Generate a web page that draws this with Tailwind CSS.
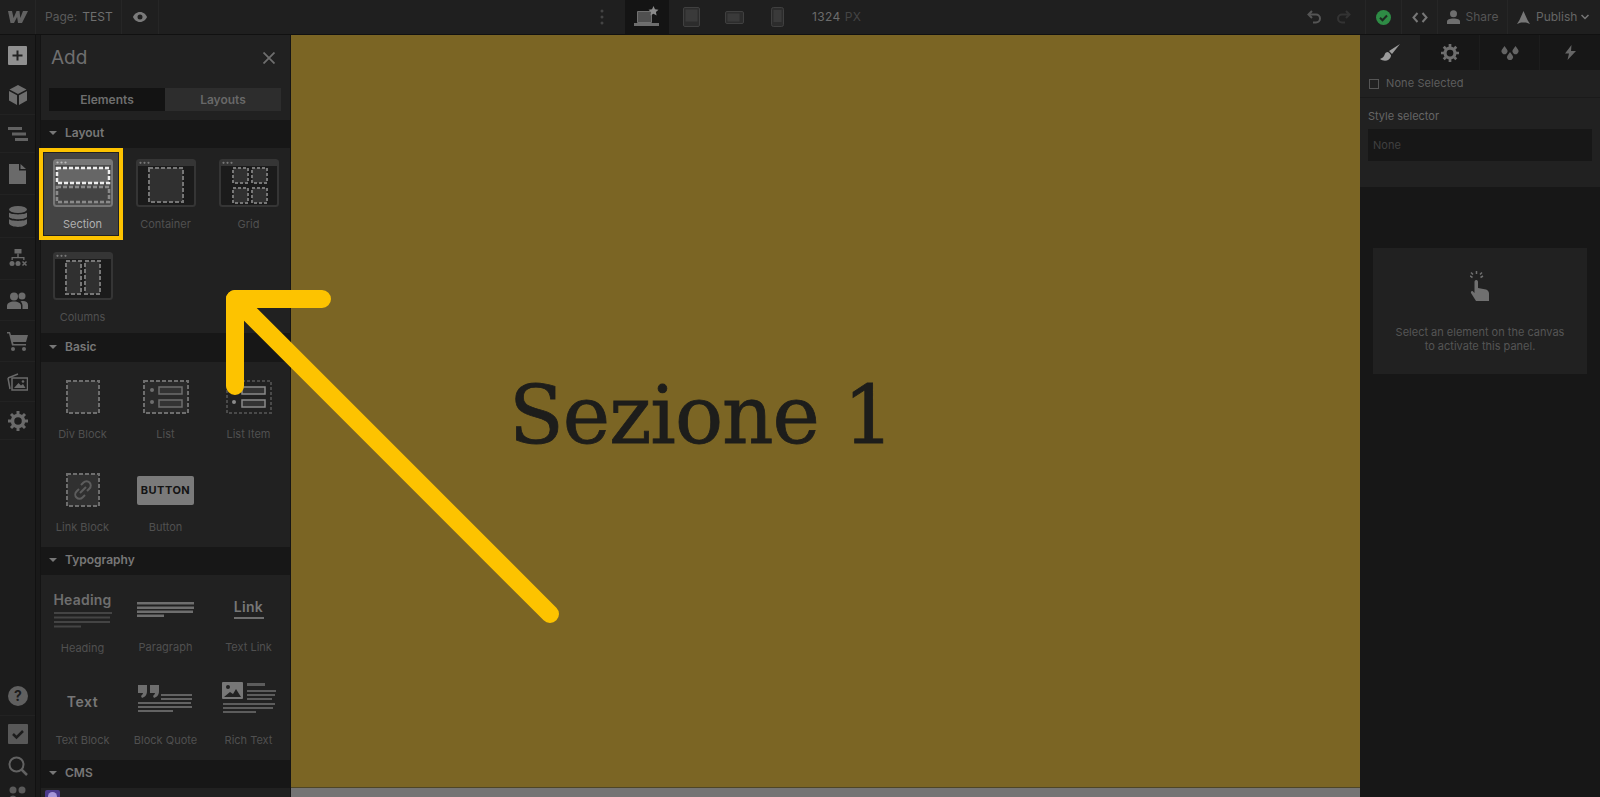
<!DOCTYPE html>
<html lang="en">
<head>
<meta charset="UTF-8">
<title>Webflow Designer</title>
<script src="https://cdn.jsdelivr.net/npm/@tailwindcss/browser@4"></script>
</head>
<body class="bg-[#171717] font-['Inter','Liberation_Sans',sans-serif] overflow-hidden">
<div class="h-[797px] w-[1600px] flex flex-col overflow-hidden relative">

    <!-- Top bar -->
    <header class="h-[35px] shrink-0 flex items-center bg-[#1f1f1f] border-b border-[#111] text-[12px] text-[#666]">
        <div class="w-[36px] h-full flex items-center justify-center border-r border-[#262626]">
            <svg width="20" height="14" viewBox="0 0 20 14" fill="#626262"><path d="M0 1h4l1.600 7L8.500 1h3l.8 7L15 1h5l-6 12h-4l-.9-6L6 13H2.500z"/></svg>
        </div>
        <div class="w-[86px] h-full pl-[9px] flex items-center gap-[5px] border-r border-[#262626]"><span class="text-[#5a5a5a]">Page:</span><span class="text-[#6e6e6e]">TEST</span></div>
        <div class="w-[37px] h-full flex items-center justify-center border-r border-[#262626]">
            <svg width="14" height="10" viewBox="0 0 14 10" fill="#7a7a7a"><path fill-rule="evenodd" d="M7 0c3.500 0 6 2.500 7 5-1 2.500-3.500 5-7 5S1 7.500 0 5c1-2.500 3.500-5 7-5zm0 2.500a2.500 2.500 0 1 0 0 5 2.500 2.500 0 0 0 0-5z"/></svg>
        </div>
        <div class="w-[466px] h-full flex items-center justify-end pr-[21px]">
            <svg width="4" height="16" viewBox="0 0 4 16" fill="#444"><circle cx="2" cy="2" r="1.500"/><circle cx="2" cy="8" r="1.500"/><circle cx="2" cy="14" r="1.500"/></svg>
        </div>
        <div class="w-[44px] h-full bg-[#141414] flex items-center justify-center">
            <svg width="26" height="22" viewBox="0 0 26 22"><path d="M3.500 5.500h14v11h-14z" fill="#505050" stroke="#707070"/><path d="M0 17h25v3H0z" fill="#6d6d6d"/><path d="M19.500 0l1.500 3.300 3.500.4-2.600 2.400.7 3.500-3.100-1.800-3.100 1.800.7-3.500-2.600-2.400 3.500-.4z" fill="#8a8a8a"/></svg>
        </div>
        <div class="w-[44px] h-full flex items-center justify-center">
            <svg width="17" height="20" viewBox="0 0 17 20"><rect x=".5" y=".5" width="16" height="19" rx="1.500" fill="#2c2c2c" stroke="#404040"/><rect x="2.500" y="2.500" width="12" height="12" fill="#3a3a3a"/></svg>
        </div>
        <div class="w-[42px] h-full flex items-center justify-center">
            <svg width="19" height="13" viewBox="0 0 19 13"><rect x=".5" y=".5" width="18" height="12" rx="1.500" fill="#2c2c2c" stroke="#404040"/><rect x="2.500" y="2.500" width="12" height="8" fill="#3a3a3a"/></svg>
        </div>
        <div class="w-[45px] h-full flex items-center justify-center">
            <svg width="13" height="20" viewBox="0 0 13 20"><rect x=".5" y=".5" width="12" height="19" rx="2" fill="#2c2c2c" stroke="#404040"/><rect x="2.500" y="3" width="8" height="12" fill="#3a3a3a"/></svg>
        </div>
        <div class="pl-[12px] w-[500px] flex items-center gap-[4px] tracking-[.4px]"><span class="text-[#6b6b6b]">1324</span><span class="text-[#444]">PX</span></div>

        <div class="w-[29px] flex justify-center">
            <svg width="15" height="14" viewBox="0 0 15 14" fill="none" stroke="#555" stroke-width="2"><path d="M5 1L1.500 4.500 5 8"/><path d="M2 4.500h7a4 4 0 0 1 0 8H6"/></svg>
        </div>
        <div class="w-[29px] flex justify-center mr-[7px]">
            <svg width="15" height="14" viewBox="0 0 15 14" fill="none" stroke="#333" stroke-width="2"><path d="M10 1l3.500 3.500L10 8"/><path d="M13 4.500H6a4 4 0 0 0 0 8h3"/></svg>
        </div>
        <div class="w-[36px] h-full flex items-center justify-center border-l border-[#262626]">
            <svg width="15" height="15" viewBox="0 0 15 15"><circle cx="7.500" cy="7.500" r="7.500" fill="#2e8b45"/><path d="M4 7.800l2.500 2.500L11 5.500" fill="none" stroke="#1d2a20" stroke-width="2"/></svg>
        </div>
        <div class="w-[36px] h-full flex items-center justify-center border-l border-[#262626]">
            <svg width="16" height="11" viewBox="0 0 16 11" fill="none" stroke="#777" stroke-width="2"><path d="M5.500 1L1.500 5.500 5.500 10"/><path d="M10.500 1l4 4.500-4 4.500"/></svg>
        </div>
        <div class="w-[70px] h-full flex items-center justify-center gap-[6px] border-l border-[#262626]">
            <svg width="13" height="14" viewBox="0 0 13 14" fill="#6f6f6f"><circle cx="6.500" cy="3.800" r="3.500"/><path d="M0 14v-2.500C0 9.500 2.500 8.500 6.500 8.500s6.500 1 6.500 3V14z"/></svg>
            <span class="text-[#555]">Share</span>
        </div>
        <div class="flex-1 h-full flex items-center pl-[9px] border-l border-[#262626]">
            <svg width="13" height="13" viewBox="0 0 13 13" fill="#777"><path d="M6.500 0l4 9 2.500 4-4-1.500h-5L0 13l2.500-4z"/></svg>
            <span class="text-[#666] ml-[6px] mr-[4px]">Publish</span>
            <svg width="8" height="6" viewBox="0 0 8 6" fill="none" stroke="#777" stroke-width="1.500"><path d="M.5 1l3.500 3.500L7.500 1"/></svg>
        </div>
    </header>

    <svg class="hidden">
        <symbol id="frame" viewBox="0 0 60 48">
            <rect x="1" y="1" width="58" height="46" rx="2.500" fill="#1b1b1b" stroke="#353535" stroke-width="2"/>
            <rect x="1" y="1" width="58" height="6" fill="#353535"/>
            <circle cx="4.500" cy="3.800" r="1.100" fill="#777"/><circle cx="8.500" cy="3.800" r="1.100" fill="#777"/><circle cx="12.500" cy="3.800" r="1.100" fill="#777"/>
        </symbol>
        <symbol id="dashbox" viewBox="0 0 34 34">
            <rect x="1" y="1" width="32" height="32" fill="#303030" stroke="#6e6e6e" stroke-width="2" stroke-dasharray="4 2"/>
        </symbol>
    </svg>

    <div class="flex-1 flex min-h-0">
        <!-- Left rail -->
        <nav class="w-[36px] shrink-0 bg-[#1c1c1c] border-r border-[#111] relative">
            <div class="h-[40px] flex items-center justify-center">
                <svg width="19" height="19" viewBox="0 0 19 19"><rect width="19" height="19" rx="1" fill="#909090"/><path d="M9.500 4.500v10M4.500 9.500h10" stroke="#222" stroke-width="2"/></svg>
            </div>
            <div class="h-[40px] flex items-center justify-center border-b border-[#222]">
                <svg width="20" height="20" viewBox="0 0 20 20" fill="#6e6e6e"><path d="M10 0l8.500 4.500L10 9 1.500 4.500z"/><path d="M1 6l8 4.300V20l-8-4.500z"/><path d="M19 6l-8 4.300V20l8-4.500z"/></svg>
            </div>
            <div class="h-[38px] flex items-center justify-center border-b border-[#222]">
                <svg width="20" height="16" viewBox="0 0 20 16" fill="#626262"><path d="M0 1h14v3H0zM4 6.500h14v3H4zM7 12h13v3H7z"/></svg>
            </div>
            <div class="h-[42px] flex items-center justify-center border-b border-[#222]">
                <svg width="17" height="20" viewBox="0 0 17 20" fill="#6a6a6a"><path d="M0 0h10v6.500h7V20H0zM11.500 0L17 5h-5.500z"/></svg>
            </div>
            <div class="h-[43px] flex items-center justify-center border-b border-[#222]">
                <svg width="18" height="21" viewBox="0 0 18 21" fill="#696969"><ellipse cx="9" cy="3.500" rx="9" ry="3.500"/><path d="M0 6.500c2 2.500 16 2.500 18 0V11c-2 3-16 3-18 0zM0 13c2 2.500 16 2.500 18 0v4.500c-2 4.500-16 4.500-18 0z"/></svg>
            </div>
            <div class="h-[42px] flex items-center justify-center border-b border-[#222]">
                <svg width="20" height="20" viewBox="0 0 20 20" fill="#6a6a6a"><rect x="6.500" y="0" width="7" height="4.500"/><path d="M9.300 4.500h1.400v3.500h5.800v3h-1.300V9.300H4.800V11H3.500V8h5.800z"/><circle cx="4" cy="14.500" r="2.500"/><circle cx="10" cy="14.500" r="2.500"/><path d="M14.500 12.500l4 4m0-4l-4 4" stroke="#6a6a6a" stroke-width="1.500"/></svg>
            </div>
            <div class="h-[41px] flex items-center justify-center border-b border-[#222]">
                <svg width="21" height="17" viewBox="0 0 21 17" fill="#6c6c6c"><circle cx="7" cy="4.500" r="4"/><circle cx="15" cy="4" r="3.500"/><path d="M0 17v-3c0-3 3-4.500 7-4.500s7 1.500 7 4.500v3z"/><path d="M15.500 17v-3.500c0-1.500-.8-3-2-4 1-.5 1.800-.5 2.500-.5 3 0 5 1.500 5 4v4z"/></svg>
            </div>
            <div class="h-[41px] flex items-center justify-center border-b border-[#222]">
                <svg width="21" height="19" viewBox="0 0 21 19" fill="#686868"><path d="M0 0h3l1 3h17l-2 7H6l.5 2H19v1.500H5L2 1.500H0z"/><circle cx="6" cy="17" r="2"/><circle cx="17" cy="17" r="2"/></svg>
            </div>
            <div class="h-[40px] flex items-center justify-center border-b border-[#222]">
                <svg width="21" height="18" viewBox="0 0 21 18"><path d="M1 5l10-4" stroke="#6a6a6a" stroke-width="1.500"/><path d="M1 5l2 11" stroke="#6a6a6a" stroke-width="1.500"/><rect x="5" y="5" width="15.500" height="12" fill="#1c1c1c" stroke="#6a6a6a" stroke-width="1.500"/><path d="M7 15l4.500-5 2.500 2.500 2-1.500 2.500 4z" fill="#6a6a6a"/><circle cx="16" cy="8.500" r="1.300" fill="#6a6a6a"/></svg>
            </div>
            <div class="h-[38px] flex items-center justify-center border-b border-[#222]">
                <svg width="20" height="20" viewBox="0 0 20 20"><circle cx="10" cy="10" r="5.500" fill="none" stroke="#6a6a6a" stroke-width="3.500"/><path d="M10 0v20M0 10h20M3 3l14 14M17 3L3 17" stroke="#6a6a6a" stroke-width="3" stroke-dasharray="3.500 13 3.500 13"/></svg>
            </div>

            <div class="absolute top-[641px] left-0 w-full">
                <div class="h-[40px] flex items-center justify-center border-b border-[#222]">
                    <svg width="20" height="20" viewBox="0 0 20 20"><circle cx="10" cy="10" r="10" fill="#606060"/><text x="10" y="15" text-anchor="middle" font-size="14" font-weight="700" fill="#1c1c1c" font-family="Inter">?</text></svg>
                </div>
                <div class="h-[35px] flex items-center justify-center">
                    <svg width="20" height="20" viewBox="0 0 20 20"><rect width="20" height="20" rx="1" fill="#585858"/><path d="M5 10l3.500 3.500L15 7" fill="none" stroke="#1c1c1c" stroke-width="2.500"/></svg>
                </div>
                <div class="h-[29px] flex items-center justify-center">
                    <svg width="20" height="20" viewBox="0 0 20 20" fill="none" stroke="#626262" stroke-width="2"><circle cx="8.500" cy="8.500" r="7"/><path d="M13.500 13.500l5.500 5.500" stroke-width="2.500"/></svg>
                </div>
                <div class="h-[26px] flex justify-center pt-[6px]">
                    <svg width="20" height="14" viewBox="0 0 20 14" fill="#5a5a5a"><circle cx="5" cy="4" r="3.500"/><circle cx="14" cy="4" r="3.500"/><circle cx="5" cy="13" r="3.500"/></svg>
                </div>
            </div>
        </nav>
        <div class="w-[5px] shrink-0 bg-[#191919] border-r border-[#141414]"></div>

        <!-- Add panel -->
        <aside class="w-[250px] shrink-0 bg-[#212121] border-r border-[#151515] text-[11px] text-[#505050]">
            <div class="h-[85px] relative">
                <div class="px-[10px] pt-[10px] flex items-center justify-between pr-[15px]">
                    <span class="text-[19px] leading-[25px] text-[#6f6f6f]">Add</span>
                    <svg width="12" height="12" viewBox="0 0 12 12" stroke="#6e6e6e" stroke-width="1.800"><path d="M.5.5l11 11M11.500.5l-11 11"/></svg>
                </div>
                <div class="absolute top-[53px] left-[8px] w-[232px] h-[23px] flex text-[12px] font-semibold">
                    <div class="w-[116px] bg-[#131313] flex items-center justify-center text-[#6e6e6e]">Elements</div>
                    <div class="w-[116px] bg-[#2d2d2d] flex items-center justify-center text-[#686868]">Layouts</div>
                </div>
            </div>

            <!-- Layout -->
            <div class="h-[28px] pb-[2px] bg-[#171717] flex items-center pl-[8px] gap-[8px] text-[12px] font-semibold text-[#777]">
                <span class="w-0 h-0 border-x-[4px] border-x-transparent border-t-[4px] border-t-[#777]"></span>Layout
            </div>
            <div class="grid grid-cols-[83px_83px_83px] auto-rows-[92px] gap-y-px h-[185px]">
                <div class="relative flex flex-col items-center pt-[11px]">
                    <div class="absolute -left-[2px] top-0 w-[84px] h-[92px] border-[4px] border-[#fdc300] outline outline-[1px] -outline-offset-[5px] outline-[#222] bg-[#444]"></div>
                    <svg class="relative" width="60" height="48" viewBox="0 0 60 48">
                        <rect x="1" y="1" width="58" height="46" rx="2.500" fill="#4c4c4c" stroke="#777" stroke-width="2"/>
                        <rect x="1" y="1" width="58" height="5" fill="#777"/>
                        <circle cx="4.500" cy="3.500" r="1.100" fill="#bbb"/><circle cx="8.500" cy="3.500" r="1.100" fill="#bbb"/><circle cx="12.500" cy="3.500" r="1.100" fill="#bbb"/>
                        <rect x="4" y="9" width="52" height="15" fill="#666" stroke="#eee" stroke-width="2.500" stroke-dasharray="4 2"/>
                        <rect x="4" y="28" width="52" height="15" fill="#444" stroke="#8a8a8a" stroke-width="2.500" stroke-dasharray="4 2"/>
                    </svg>
                    <span class="relative mt-[9px] text-[#b0b0b0]">Section</span>
                </div>
                <div class="flex flex-col items-center pt-[11px]">
                    <svg width="60" height="48" viewBox="0 0 60 48"><use href="#frame"/><rect x="13" y="9" width="34" height="34" fill="#303030" stroke="#777" stroke-width="2" stroke-dasharray="4 2"/></svg>
                    <span class="mt-[9px]">Container</span>
                </div>
                <div class="flex flex-col items-center pt-[11px]">
                    <svg width="60" height="48" viewBox="0 0 60 48"><use href="#frame"/><g fill="#303030" stroke="#777" stroke-width="2" stroke-dasharray="3 2"><rect x="14" y="9" width="15" height="15"/><rect x="33" y="9" width="15" height="15"/><rect x="14" y="29" width="15" height="15"/><rect x="33" y="29" width="15" height="15"/></g></svg>
                    <span class="mt-[9px]">Grid</span>
                </div>
                <div class="flex flex-col items-center pt-[11px]">
                    <svg width="60" height="48" viewBox="0 0 60 48"><use href="#frame"/><g fill="#303030" stroke="#777" stroke-width="2" stroke-dasharray="4 2"><rect x="13" y="9" width="15" height="33"/><rect x="32" y="9" width="15" height="33"/></g></svg>
                    <span class="mt-[9px]">Columns</span>
                </div>
            </div>

            <!-- Basic -->
            <div class="h-[29px] pb-[2px] bg-[#171717] flex items-center pl-[8px] gap-[8px] text-[12px] font-semibold text-[#777]">
                <span class="w-0 h-0 border-x-[4px] border-x-transparent border-t-[4px] border-t-[#777]"></span>Basic
            </div>
            <div class="grid grid-cols-[83px_83px_83px] auto-rows-[92px] gap-y-px h-[185px]">
                <div class="flex flex-col items-center pt-[18px]">
                    <svg width="34" height="34" viewBox="0 0 34 34"><use href="#dashbox"/></svg>
                    <span class="mt-[12px]">Div Block</span>
                </div>
                <div class="flex flex-col items-center pt-[18px]">
                    <svg width="46" height="34" viewBox="0 0 46 34"><rect x="1" y="1" width="44" height="32" fill="#2a2a2a" stroke="#6e6e6e" stroke-width="2" stroke-dasharray="4 2"/><circle cx="9" cy="10" r="2" fill="#6e6e6e"/><circle cx="9" cy="22" r="2" fill="#6e6e6e"/><rect x="16" y="7" width="23" height="7" fill="#333" stroke="#6e6e6e" stroke-width="1.500"/><rect x="16" y="20" width="23" height="7" fill="#333" stroke="#6e6e6e" stroke-width="1.500"/></svg>
                    <span class="mt-[12px]">List</span>
                </div>
                <div class="flex flex-col items-center pt-[18px]">
                    <svg width="46" height="34" viewBox="0 0 46 34"><rect x="1" y="1" width="44" height="32" fill="none" stroke="#4a4a4a" stroke-width="2" stroke-dasharray="3 2"/><circle cx="8" cy="22" r="2" fill="#8a8a8a"/><rect x="16" y="7" width="23" height="7" fill="#333" stroke="#8a8a8a" stroke-width="1.500"/><rect x="16" y="20" width="23" height="7" fill="#333" stroke="#8a8a8a" stroke-width="1.500"/></svg>
                    <span class="mt-[12px]">List Item</span>
                </div>
                <div class="flex flex-col items-center pt-[18px]">
                    <svg width="34" height="34" viewBox="0 0 34 34"><use href="#dashbox"/><path d="M14 20l6-6M15 12l2.500-2.500a4 4 0 0 1 6 6L21 18M19 22l-2.500 2.500a4 4 0 0 1-6-6L13 16" fill="none" stroke="#5c5c5c" stroke-width="2"/></svg>
                    <span class="mt-[12px]">Link Block</span>
                </div>
                <div class="flex flex-col items-center pt-[21px]">
                    <div class="w-[57px] h-[29px] rounded-[2px] bg-[#7a7a7a] flex items-center justify-center text-[11px] font-bold tracking-[.5px] text-[#141414]">BUTTON</div>
                    <span class="mt-[14px]">Button</span>
                </div>
            </div>

            <!-- Typography -->
            <div class="h-[28px] pb-[2px] bg-[#171717] flex items-center pl-[8px] gap-[8px] text-[12px] font-semibold text-[#777]">
                <span class="w-0 h-0 border-x-[4px] border-x-transparent border-t-[4px] border-t-[#777]"></span>Typography
            </div>
            <div class="grid grid-cols-[83px_83px_83px] auto-rows-[92px] gap-y-px h-[185px]">
                <div class="flex flex-col items-center pt-[17px]">
                    <span class="text-[14px] leading-[16px] font-semibold text-[#6e6e6e] tracking-[.2px]">Heading</span>
                    <svg class="mt-[4px]" width="58" height="16" viewBox="0 0 58 16" fill="#444"><path d="M0 0h58v2H0zM0 4.500h56v2H0zM0 9h56v2H0zM0 13.500h27v2H0z"/></svg>
                    <span class="mt-[12px]">Heading</span>
                </div>
                <div class="flex flex-col items-center pt-[27px]">
                    <svg width="57" height="15" viewBox="0 0 57 15" fill="#6e6e6e"><path d="M0 0h57v2.500H0zM0 4.500h57V7H0zM0 8.500h56V11H0zM0 12.500h27V15H0z"/></svg>
                    <span class="mt-[22px]">Paragraph</span>
                </div>
                <div class="flex flex-col items-center pt-[24px]">
                    <span class="text-[14px] leading-[16px] font-semibold text-[#777] tracking-[.3px]">Link</span>
                    <div class="w-[30px] h-[2px] bg-[#6e6e6e] mt-[2px]"></div>
                    <span class="mt-[20px]">Text Link</span>
                </div>
                <div class="flex flex-col items-center pt-[26px]">
                    <span class="text-[14px] leading-[16px] font-semibold text-[#777] tracking-[.5px]">Text</span>
                    <span class="mt-[22px]">Text Block</span>
                </div>
                <div class="flex flex-col items-center pt-[17px]">
                    <svg width="56" height="28" viewBox="0 0 56 28" fill="#6e6e6e"><path d="M0 0h9v6c0 4-2 6-5 7l-1-2c1-1 2-2 2-3H0zM12 0h9v6c0 4-2 6-5 7l-1-2c1-1 2-2 2-3h-5z"/><path d="M23 9h31v2H23zM23 13h31v2H23zM0 17h53v2H0zM0 21h54v2H0zM0 25h35v2H0z" fill="#636363"/></svg>
                    <span class="mt-[19px]">Block Quote</span>
                </div>
                <div class="flex flex-col items-center pt-[14px]">
                    <svg width="54" height="33" viewBox="0 0 54 33" fill="#666"><rect width="21" height="17" rx="1" fill="#777"/><circle cx="6" cy="5" r="2" fill="#222"/><path d="M2 15l6-5 3 2 3-5 5 8z" fill="#222"/><path d="M25 1h18v3H25zM25 8h29v2H25zM25 12h28v2H25zM25 16h25v2H25zM1 21h52v2H1zM1 25h50v2H1zM1 29h33v2H1z" fill="#5c5c5c"/></svg>
                    <span class="mt-[17px]">Rich Text</span>
                </div>
            </div>

            <!-- CMS -->
            <div class="h-[28px] pb-[2px] bg-[#171717] flex items-center pl-[8px] gap-[8px] text-[12px] font-semibold text-[#777]">
                <span class="w-0 h-0 border-x-[4px] border-x-transparent border-t-[4px] border-t-[#777]"></span>CMS
            </div>
            <div class="pl-[4px] pt-[2px]">
                <div class="w-[15px] h-[15px] rounded-[2px] bg-[#4b3a8c] flex justify-center pt-[2px]"><div class="w-[9px] h-[9px] rounded-full bg-[#a596d8]"></div></div>
            </div>
        </aside>

        <!-- Canvas -->
        <main class="w-[1069px] shrink-0 flex flex-col">
            <div class="flex-1 bg-[#7b6524] border-b border-[#4e4526] pt-[337px] pl-[218px]">
                <h1 class="font-['DejaVu_Serif','Liberation_Serif',serif] font-normal text-[80px] leading-[88px] text-[#1d1d1b] tracking-[-1px] [-webkit-text-stroke:0.8px_#1d1d1b]">Sezione 1</h1>
            </div>
            <div class="h-[9px] bg-[#747474]"></div>
        </main>

        <!-- Style panel -->
        <aside class="flex-1 bg-[#171717] text-[11px]">
            <div class="h-[35px] flex">
                <div class="w-[60px] bg-[#212121] flex items-center justify-center">
                    <svg width="20" height="18" viewBox="0 0 20 18" fill="#9c9c9c"><path d="M20 0L9 7l3 3zM8 8c-2 0-3 1-3.500 3C4 13 2 14 0 15c4 3 10 2 11-3 .2-1-.5-2-3-4z"/></svg>
                </div>
                <div class="w-[60px] flex items-center justify-center border-r border-[#1d1d1d]">
                    <svg width="18" height="18" viewBox="0 0 20 20"><circle cx="10" cy="10" r="5.500" fill="none" stroke="#6e6e6e" stroke-width="3.500"/><path d="M10 0v20M0 10h20M3 3l14 14M17 3L3 17" stroke="#6e6e6e" stroke-width="3" stroke-dasharray="3.500 13 3.500 13"/></svg>
                </div>
                <div class="w-[60px] flex items-center justify-center border-r border-[#1d1d1d]">
                    <svg width="18" height="14" viewBox="0 0 18 14" fill="#646464"><path d="M3.500 0l2.500 3.500a3 3 0 1 1-5 0zM14.500 0L17 3.500a3 3 0 1 1-5 0zM9 6l2.500 3.500a3 3 0 1 1-5 0z"/></svg>
                </div>
                <div class="flex-1 flex items-center justify-center">
                    <svg width="12" height="15" viewBox="0 0 12 15" fill="#666"><path d="M7.500 0L1 8.500h4L3.500 15 12 6H7z"/></svg>
                </div>
            </div>
            <div class="bg-[#212121] h-[117px]">
                <div class="h-[28px] border-b border-[#1a1a1a] flex items-center pl-[9px] gap-[7px] text-[#5e5e5e]">
                    <span class="w-[10px] h-[10px] border border-[#555]"></span><span class="text-[11px] tracking-[.1px]">None Selected</span>
                </div>
                <p class="pl-[8px] pt-[11px] leading-[14px] text-[#666]">Style selector</p>
                <div class="ml-[8px] mt-[6px] w-[224px] h-[32px] bg-[#171717] flex items-center pl-[5px] text-[#404040]">None</div>
            </div>
            <div class="mx-[13px] mt-[61px] h-[126px] bg-[#212121] flex flex-col items-center pt-[23px] text-[11px] leading-[14px] text-[#555] text-center">
                <svg width="20" height="30" viewBox="0 0 20 30" fill="#707070"><path d="M6 9c1 0 2 .5 2 2v6l8 1.500c1.500.5 3 2 3 4V30H6l-5-8c-.5-1.500 1-2.500 2-1.500L4.500 22V11c0-1 .5-2 1.500-2z"/><path d="M6.500 0v3M0 5l2.500 1.500M13 5l-2.500 1.500M1 1.500L3 3.500M12 1.500l-2 2" stroke="#707070" stroke-width="1.500" fill="none"/></svg>
                <p class="mt-[24px]">Select an element on the canvas<br>to activate this panel.</p>
            </div>
        </aside>
    </div>

    <!-- Yellow arrow annotation -->
    <svg class="absolute inset-0 pointer-events-none" width="1600" height="797" viewBox="0 0 1600 797" fill="none" stroke="#fdc300" stroke-width="18" stroke-linecap="round" stroke-linejoin="round">
        <path d="M550 614L235 299"/>
        <path d="M322 299H235V386"/>
    </svg>
</div>
</body>
</html>
